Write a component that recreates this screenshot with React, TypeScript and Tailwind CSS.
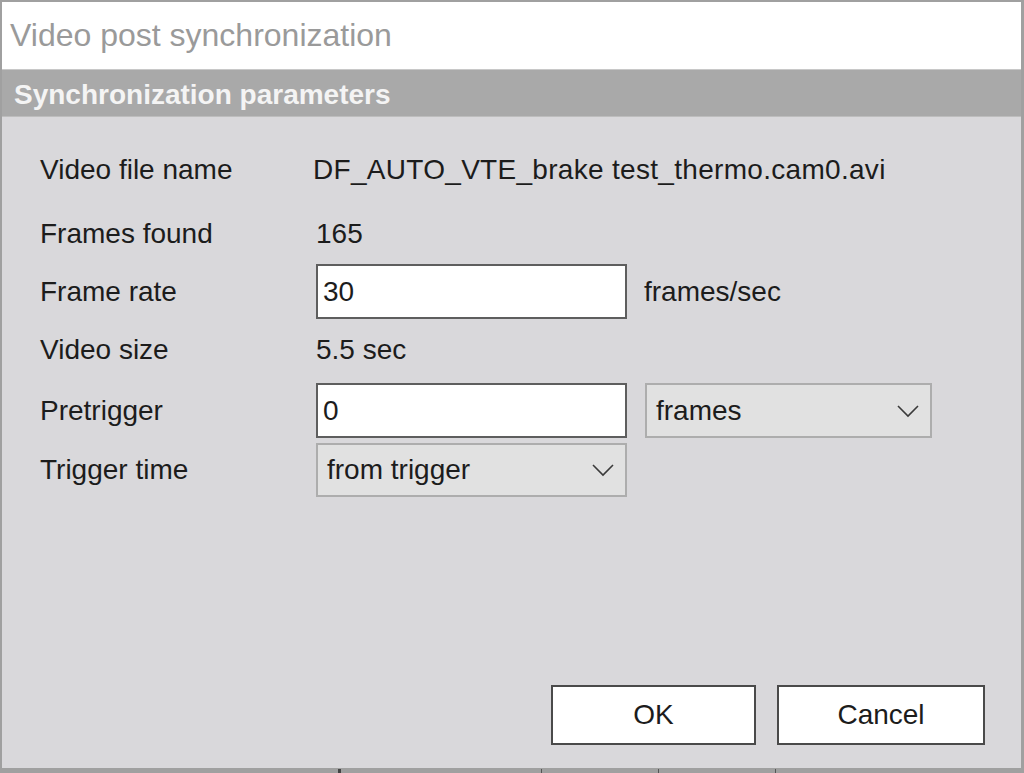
const font = { fontFamily: '"Liberation Sans", Arial, sans-serif' }

function Chevron() {
  return (
    <svg width="24" height="14" viewBox="0 0 24 14" className="shrink-0">
      <polyline points="2,2 12,12 22,2" fill="none" stroke="#3a3a3a" strokeWidth="1.6" />
    </svg>
  )
}

function Select({ value, width, pad }: { value: string; width: string; pad: string }) {
  return (
    <div
      className={`${width} h-full flex items-center justify-between ${pad} pr-[10px] bg-[#e1e1e1] border-2 border-[#adadad] text-[28px] text-[#1c1c1c]`}
    >
      <span>{value}</span>
      <Chevron />
    </div>
  )
}

export default function App() {
  const rowLabel = 'w-[276px] shrink-0 text-[28px] text-[#1c1c1c]'
  return (
    <div
      className="w-[1024px] h-[773px] bg-[#a0a0a0] flex flex-col pl-[2px] pr-[3px] pt-[2px] overflow-hidden"
      style={font}
    >
      {/* Title */}
      <div className="h-[68px] bg-white flex items-center pl-[8px] pb-[2px] border-b border-[#c8c8c8]">
        <span className="text-[32px] text-[#9a9a9a]">Video post synchronization</span>
      </div>

      {/* Section header */}
      <div className="h-[47px] bg-[#a9a9a9] flex items-center pl-[12px] pt-[3px] border-b border-[#bdbdbd]">
        <span className="text-[28px] font-bold text-[#f4f4f4]">Synchronization parameters</span>
      </div>

      {/* Body */}
      <div className="flex-1 bg-[#d9d8db] flex flex-col pl-[38px] pt-[33px]">
        <div className="h-[40px] flex items-center">
          <span className={rowLabel}>Video file name</span>
          <span className="text-[28px] text-[#1c1c1c] -ml-[3px] tracking-[0.3px]">
            DF_AUTO_VTE_brake test_thermo.cam0.avi
          </span>
        </div>

        <div className="h-[40px] mt-[24px] flex items-center">
          <span className={rowLabel}>Frames found</span>
          <span className="text-[28px] text-[#1c1c1c]">165</span>
        </div>

        <div className="h-[55px] mt-[10px] flex items-center">
          <span className={rowLabel}>Frame rate</span>
          <div className="w-[311px] h-full bg-white border-2 border-[#5e5e5e] flex items-center pl-[5px] text-[28px] text-[#1c1c1c]">
            30
          </div>
          <span className="ml-[17px] text-[28px] text-[#1c1c1c]">frames/sec</span>
        </div>

        <div className="h-[40px] mt-[11px] flex items-center">
          <span className={rowLabel}>Video size</span>
          <span className="text-[28px] text-[#1c1c1c]">5.5 sec</span>
        </div>

        <div className="h-[55px] mt-[13px] flex items-center">
          <span className={rowLabel}>Pretrigger</span>
          <div className="w-[311px] h-full bg-white border-2 border-[#5e5e5e] flex items-center pl-[5px] text-[28px] text-[#1c1c1c]">
            0
          </div>
          <div className="ml-[18px] h-full">
            <Select value="frames" width="w-[287px]" pad="pl-[9px]" />
          </div>
        </div>

        <div className="h-[54px] mt-[5px] flex items-center">
          <span className={rowLabel}>Trigger time</span>
          <Select value="from trigger" width="w-[311px]" pad="pl-[9px]" />
        </div>

        <div className="mt-auto flex justify-end gap-[21px] pr-[36px] pb-[23px]">
          <button className="w-[205px] h-[60px] bg-white border-2 border-[#4a4a4a] text-[28px] text-[#1c1c1c]">
            OK
          </button>
          <button className="w-[208px] h-[60px] bg-white border-2 border-[#4a4a4a] text-[28px] text-[#1c1c1c]">
            Cancel
          </button>
        </div>
      </div>

      {/* Bottom edge */}
      <div className="h-[5px] relative -mx-[2px]">
        <div className="absolute left-[338px] top-[1px] w-[3px] h-[4px] bg-[#444]" />
        <div className="absolute left-[541px] top-[1px] w-[1px] h-[4px] bg-[#555]" />
        <div className="absolute left-[658px] top-[1px] w-[1px] h-[4px] bg-[#555]" />
        <div className="absolute left-[775px] top-[1px] w-[1px] h-[4px] bg-[#555]" />
      </div>
    </div>
  )
}
